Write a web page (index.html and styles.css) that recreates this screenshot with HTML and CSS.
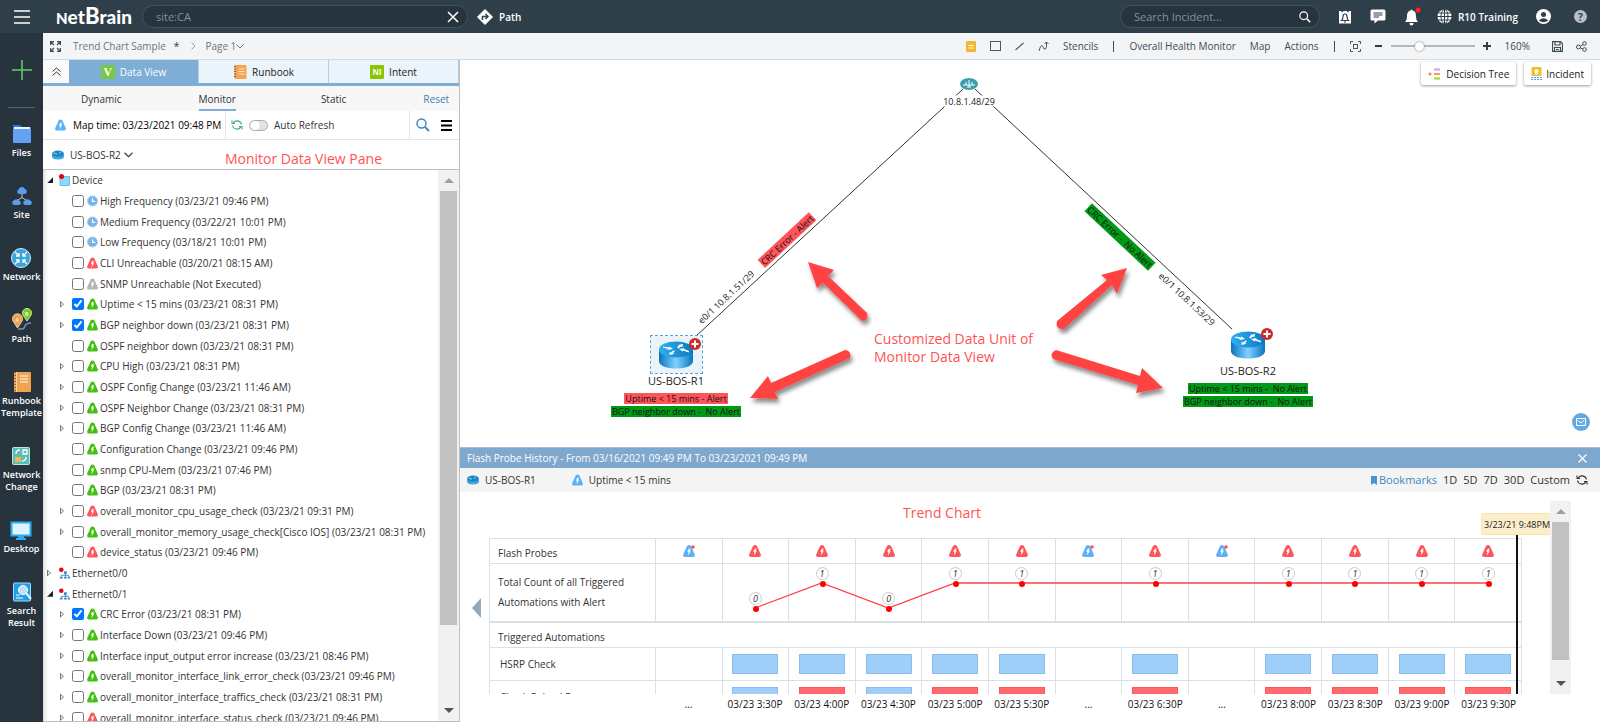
FILE: index.html
```
<!DOCTYPE html>
<html lang="en">
<head>
<meta charset="utf-8">
<title>NetBrain - Trend Chart Sample</title>
<link rel="stylesheet" href="styles.css">
</head>
<body>
<svg class="defs" aria-hidden="true">
  <defs>
    <linearGradient id="side" x1="0" x2="1"><stop offset="0" stop-color="#0a74c0"/><stop offset=".5" stop-color="#7fd2ff"/><stop offset="1" stop-color="#0a74c0"/></linearGradient>
    <linearGradient id="top" x1="0" x2="1"><stop offset="0" stop-color="#2fb2ef"/><stop offset="1" stop-color="#0b78c4"/></linearGradient>
    <filter id="shade" x="-20%" y="-20%" width="150%" height="150%"><feDropShadow dx="2" dy="4" stdDeviation="2" flood-color="#000" flood-opacity=".45"/></filter>
    <symbol id="probe" viewBox="0 0 12 12"><path fill="currentColor" d="M4 1Q6-.9 8 1L11.700 9.200Q12.400 12 10 12H2Q-.4 12 .3 9.200Z"/><path fill="#fff" d="M6.600 3.500Q4.500 4 4.500 7H5.500L4.800 10.500 7.800 6.200H6.600L7.600 4Z"/></symbol>
    <symbol id="clock" viewBox="0 0 12 12"><circle cx="6" cy="6" r="5.500" fill="#76b4e8" stroke="#a9cff0"/><path d="M6 3V6.500H9" fill="none" stroke="#fff" stroke-width="1.300"/></symbol>
    <symbol id="iface" viewBox="0 0 12 12"><path d="M5.500 4H8.500V7H5.500ZM1 10H4V12H1ZM5.500 10H8.500V12H5.500ZM9.500 10H12V12H9.500Z" fill="#3c8bc4"/><path d="M7 6V10M2.500 10V8.500H10.500V10" fill="none" stroke="#3c8bc4"/><circle cx="2.500" cy="2.500" r="2.500" fill="#e60012"/></symbol>
    <symbol id="router" viewBox="0 0 36 28"><path d="M1 8V20C1 25 9 27.500 18 27.500S35 25 35 20V8Z" fill="url(#side)"/><ellipse cx="18" cy="8.500" rx="17" ry="8" fill="url(#top)"/><g fill="#fff"><path d="M5 5.500 11 6.500 11.500 5.500 15 8 9.500 9 10 8 5 6.500ZM31 11.500 25 9.500 24.500 10.500 21 8 26.500 7 26 8 31 10ZM19 6.500 21 4.500 19.800 4 25 3 24.500 6 23 5.500 20.500 7.500ZM17 10 15 12 16.500 12.800 11.500 14 11.500 11 13 11.500 15.500 9.500Z"/></g></symbol>
    <symbol id="mini-router" viewBox="0 0 12 10"><path d="M0 4Q0 .5 6 .5T12 4V6.500Q12 9.500 6 9.500T0 6.500Z" fill="#3fa6e0"/><ellipse cx="6" cy="3.800" rx="5.500" ry="3" fill="#1f86c4"/><path d="M1.500 3 5 4.200M7 3.500 9 2" stroke="#8fd2f5"/></symbol>
    <symbol id="plus" viewBox="0 0 12 12"><circle cx="6" cy="6" r="6" fill="#cf2a2a"/><path d="M6 2.500V9.500M2.500 6H9.500" stroke="#fff" stroke-width="2"/></symbol>
    <symbol id="refresh" viewBox="0 0 12 12"><g fill="none" stroke="currentColor" stroke-width="1.100"><path d="M2 4.500A4.500 4.500 0 0 1 10.500 5.500M10 7.500A4.500 4.500 0 0 1 1.500 6.500"/><path d="M1 1.500V4.500H4M11 10.500V7.500H8"/></g></symbol>
    <symbol id="search" viewBox="0 0 14 14"><circle cx="5.500" cy="5.500" r="4.500" fill="none" stroke="currentColor" stroke-width="1.400"/><path d="M9 9 13 13" stroke="currentColor" stroke-width="1.800"/></symbol>
    <symbol id="caret" viewBox="0 0 8 5"><path d="M.5.500 4 4 7.500.5" fill="none" stroke="currentColor"/></symbol>
  </defs>
</svg>

<header class="header">
  <button class="icon-btn menu" aria-label="Menu"><svg width="16" height="14" viewBox="0 0 16 14"><path d="M0 1H16M0 7H16M0 13H16" stroke="#fff" stroke-width="1.500"/></svg></button>
  <a href="#" class="logo"><span class="logo-small">N</span>et<span class="logo-b">B</span>rain</a>
  <div class="pill pill-main">
    <input type="text" value="site:CA" aria-label="Search">
    <button class="icon-btn" aria-label="Clear"><svg width="12" height="12" viewBox="0 0 12 12"><path d="M1 1 11 11M11 1 1 11" stroke="#fff" stroke-width="1.500"/></svg></button>
  </div>
  <a href="#" class="path-link"><svg width="16" height="16" viewBox="0 0 16 16"><path d="M8 .5 15.500 8 8 15.500.5 8Z" fill="#fff" stroke="#fff" stroke-linejoin="round"/><path d="M5.500 11V7.500H10M8.500 5 11 7.500 8.500 10" fill="none" stroke="#2f3f4a" stroke-width="1.500"/></svg>Path</a>
  <div class="header-right">
    <div class="pill pill-incident">
      <input type="text" placeholder="Search Incident..." aria-label="Search Incident">
      <button class="icon-btn" aria-label="Search"><svg width="12" height="12"><use href="#search"/></svg></button>
    </div>
    <button class="icon-btn" aria-label="Alarm"><svg width="14" height="14" viewBox="0 0 14 14"><path d="M1 1H3L4 2.500 5.500 1H8.500L10 2.500 11 1H13V13.500H1Z" fill="#fff"/><path d="M3.500 10.500Q5 9 5 6.500T7 4 9 6.500 10.500 10.500ZM6 12H8" fill="#fff" stroke="#2f3f4a" stroke-width="1.200"/></svg></button>
    <button class="icon-btn" aria-label="Messages"><svg width="16" height="15" viewBox="0 0 16 15"><path d="M2 .5H14Q15.500.500 15.500 2V10Q15.500 11.500 14 11.500H8L4.500 14.500V11.500H2Q.5 11.500.5 10V2Q.5.500 2 .5Z" fill="#fff"/><path d="M3.500 4H12.500M3.500 6H12.500M3.500 8H9" stroke="#2f3f4a"/></svg></button>
    <button class="icon-btn" aria-label="Notifications"><svg width="18" height="19" viewBox="0 0 18 19"><path d="M1 15Q3 13.500 3 9.500C3 5 5 4 6.500 3.600Q7.500 1.500 8.500 3.600C11 4 12 6 12 9.500Q12 13.500 14 15Z" fill="#fff"/><path d="M5.500 16H9.500Q9.500 18.500 7.500 18.500T5.500 16Z" fill="#fff"/><circle cx="14" cy="3" r="2.500" fill="#f22"/></svg></button>
    <button class="tenant"><svg width="15" height="15" viewBox="0 0 15 15"><circle cx="7.500" cy="7.500" r="7" fill="#fff"/><g fill="none" stroke="#2f3f4a"><ellipse cx="7.500" cy="7.500" rx="3.500" ry="7"/><path d="M7.500 0V15M0 7.500H15M1.500 4H13.500M1.500 11H13.500"/></g></svg>R10 Training</button>
    <button class="icon-btn" aria-label="User"><svg width="15" height="15" viewBox="0 0 15 15"><circle cx="7.500" cy="7.500" r="7.500" fill="#fff"/><circle cx="7.500" cy="5.500" r="2.500" fill="#2f3f4a"/><path d="M2.800 11.500Q7.500 7 12.200 11.500 7.500 15 2.800 11.500Z" fill="#2f3f4a"/></svg></button>
    <button class="help" aria-label="Help">?</button>
  </div>
</header>

<div class="body">
  <nav class="sidebar">
    <button class="icon-btn add" aria-label="Add"><svg width="20" height="20" viewBox="0 0 20 20"><path d="M10 0V20M0 10H20" stroke="#5fd068" stroke-width="1.500"/></svg></button>
    <a href="#" class="side-item"><svg width="22" height="24" viewBox="0 0 22 24"><path d="M2 3H9L11 5H20V9H2Z" fill="#2b74d8"/><path d="M3 5H19V12H3Z" fill="#e9f2fd"/><path d="M2 7H20V20Q20 21 19 21H3Q2 21 2 20Z" fill="#64a3f3"/></svg>Files</a>
    <a href="#" class="side-item"><svg width="22" height="24" viewBox="0 0 22 24"><g fill="#5a9cf0"><path d="M8 10A2.500 2.500 0 0 1 7.500 5.500 3.500 3.500 0 0 1 14 5 2.600 2.600 0 0 1 14 10ZM3 21A2.300 2.300 0 0 1 3 16.500 3.300 3.300 0 0 1 8 16.500 2.300 2.300 0 0 1 8 21ZM14 21A2.300 2.300 0 0 1 14 16.500 3.300 3.300 0 0 1 19 16.500 2.300 2.300 0 0 1 19 21Z"/></g><path d="M11 10V13.500L7 16M11 13.500 15 16" stroke="#b8c8d8" fill="none"/></svg>Site</a>
    <a href="#" class="side-item"><svg width="22" height="24" viewBox="0 0 22 24"><circle cx="11" cy="12" r="9.500" fill="#39a5e0" stroke="#d6ecf8"/><g stroke="#fff" stroke-width="1.300" fill="none"><path d="M5 6 9 10M17 6 13 10M5 18 9 14M17 18 13 14M9 7V10H6M13 7V10H16M9 17V14H6M13 17V14H16"/></g></svg>Network</a>
    <a href="#" class="side-item"><svg width="22" height="24" viewBox="0 0 22 24"><path d="M7 21H11Q13 21 14 18T20 15" fill="none" stroke="#6d93b5" stroke-width="1.500"/><path d="M6.500 20 2 13A5 5 0 1 1 11 13Z" fill="#f0a050" stroke="#f8d0a0"/><path d="M16 13 12 7A4.500 4.500 0 1 1 20 7Z" fill="#7cc820" stroke="#c8f090"/><text x="4.500" y="14" class="pin">A</text><text x="14" y="7.500" class="pin">B</text></svg>Path</a>
    <a href="#" class="side-item"><svg width="22" height="24" viewBox="0 0 22 24"><rect x="3" y="2" width="17" height="20" rx="1" fill="#f2a350"/><path d="M4.500 2V22" stroke="#7a5a30" stroke-width="2" stroke-dasharray="1 2"/><path d="M5.500 2V22" stroke="#fbd29c"/><path d="M9 6H17M9 9H17M9 12H17" stroke="#fff"/></svg>Runbook<br>Template</a>
    <a href="#" class="side-item"><svg width="22" height="24" viewBox="0 0 22 24"><rect x="2.500" y="3.500" width="17" height="17" rx="1" fill="#5cbcb8" stroke="#bfe6e2"/><rect x="5" y="13" width="6" height="5" fill="#f5b54a"/><path d="M6 10Q6 6 10 6M16 13Q16 17 12 17M13 6H17V10H13Z" stroke="#fff" stroke-width="1.300" fill="none"/></svg>Network<br>Change</a>
    <a href="#" class="side-item"><svg width="22" height="24" viewBox="0 0 22 24"><path d="M8 17H14V20H16V22H6V20H8Z" fill="#3aa8e8"/><rect x="1.500" y="4.500" width="19" height="13" fill="#dff2fd" stroke="#28aef0" stroke-width="2"/></svg>Desktop</a>
    <a href="#" class="side-item"><svg width="22" height="24" viewBox="0 0 22 24"><rect x="2.500" y="3" width="17" height="18" rx="1" fill="#1fa0e8" stroke="#a5daf8"/><circle cx="12" cy="10" r="4.500" fill="#bfe0f5" stroke="#fff"/><path d="M15 13 20 19" stroke="#e8f4fc" stroke-width="2"/><path d="M5 15H9M5 18H12" stroke="#fff"/></svg>Search<br>Result</a>
  </nav>

  <div class="main">
    <div class="toolbar">
      <button class="icon-btn expand" aria-label="Full screen"><svg width="11" height="11" viewBox="0 0 11 11"><path d="M.6 4V.600H4M1 1 4 4M7 .6H10.400V4M10 1 7 4M.6 7V10.400H4M1 10 4 7M10.400 7V10.400H7M10 10 7 7" fill="none" stroke="#3d4b55" stroke-width="1.200"/></svg></button>
      <span class="crumb">Trend Chart Sample</span><span class="dirty">*</span>
      <svg width="5" height="8" viewBox="0 0 5 8"><path d="M.5.500 4 4 .5 7.500" fill="none" stroke="#98a0a6"/></svg>
      <button class="crumb page">Page 1<svg width="8" height="5"><use href="#caret"/></svg></button>
      <div class="tools">
        <button class="icon-btn" aria-label="Note"><svg width="10" height="11" viewBox="0 0 10 11"><rect width="10" height="11" rx="1" fill="#f2b632"/><path d="M2.500 4.500H7.500M2.500 7H7.500" stroke="#fff" stroke-width="1.200"/></svg></button>
        <button class="icon-btn" aria-label="Rectangle"><svg width="11" height="11" viewBox="0 0 11 11"><rect x=".5" y=".5" width="10" height="9" fill="none" stroke="#4a5862"/></svg></button>
        <button class="icon-btn" aria-label="Line"><svg width="9" height="9" viewBox="0 0 9 9"><path d="M.5 8 8.500 1" stroke="#4a5862" stroke-width="1.200"/></svg></button>
        <button class="icon-btn" aria-label="Curve"><svg width="11" height="11" viewBox="0 0 11 11"><path d="M1 10 2.500 5.500Q4 3 5 6T7.500 8 8.500 1M6.500 3 8.500 1 10.500 3" fill="none" stroke="#4a5862"/></svg></button>
        <button class="tool-text">Stencils</button><span class="bar"></span>
        <button class="tool-text">Overall Health Monitor</button>
        <button class="tool-text">Map</button>
        <button class="tool-text">Actions</button><span class="bar"></span>
        <button class="icon-btn" aria-label="Fit"><svg width="11" height="11" viewBox="0 0 11 11"><path d="M.5 3V.500H3M8 .5H10.500V3M10.500 8V10.500H8M3 10.500H.5V8" fill="none" stroke="#4a5862"/><rect x="3.500" y="3.500" width="4" height="4" fill="none" stroke="#4a5862"/></svg></button>
        <div class="zoom">
          <button class="icon-btn" aria-label="Zoom out"><svg width="8" height="8"><path d="M0 4H7" stroke="#2f3f4a" stroke-width="2"/></svg></button>
          <input type="range" min="0" max="100" value="32" aria-label="Zoom">
          <button class="icon-btn" aria-label="Zoom in"><svg width="8" height="8"><path d="M0 4H8M4 0V8" stroke="#2f3f4a" stroke-width="2"/></svg></button>
        </div>
        <span class="tool-text">160%</span>
        <div class="end-tools">
          <button class="icon-btn" aria-label="Save"><svg width="11" height="11" viewBox="0 0 11 11"><path d="M.6.600H8.500L10.400 2.500V10.400H.6ZM3 .6V4H8V.6M2.500 10V6.500H8.500V10M4 8.500H7" fill="none" stroke="#3d4b55" stroke-width="1.100"/></svg></button>
          <button class="icon-btn" aria-label="Share"><svg width="11" height="11" viewBox="0 0 11 11"><g fill="none" stroke="#3d4b55"><circle cx="2.500" cy="6" r="2"/><circle cx="8.500" cy="2.500" r="1.800"/><circle cx="8.500" cy="8.500" r="1.800"/><path d="M4.500 5 7 3.500M4.500 7 7 8"/></g></svg></button>
        </div>
      </div>
    </div>

    <div class="content">
      <section class="panel">
        <div class="tabs">
          <button class="collapse" aria-label="Collapse"><svg width="9" height="9" viewBox="0 0 9 9"><path d="M.5 4.500 4.500 1 8.500 4.500M.5 8.500 4.500 5 8.500 8.500" fill="none" stroke="#333"/></svg></button>
          <button class="tab active"><span class="tab-icon v">V</span>Data View</button>
          <button class="tab"><svg width="14" height="14" viewBox="0 0 14 14"><rect x="1.500" width="12" height="14" rx="1" fill="#f5a34c"/><path d="M2 1V13" stroke="#8a6030" stroke-width="2" stroke-dasharray="1 1.500"/><path d="M5.500 4H11.500M5.500 6.500H11.500M5.500 9H11.500" stroke="#fde3c4"/></svg>Runbook</button>
          <button class="tab"><span class="tab-icon ni">NI</span>Intent</button>
        </div>
        <div class="subtabs">
          <button>Dynamic</button><button class="on">Monitor</button><button>Static</button><button class="reset">Reset</button>
        </div>
        <div class="timebar">
          <div class="maptime"><svg class="blue" width="11" height="12"><use href="#probe"/></svg>Map time: 03/23/2021 09:48 PM</div>
          <div class="auto"><svg class="green" width="12" height="12"><use href="#refresh"/></svg><label class="switch"><input type="checkbox" role="switch"><span>Auto Refresh</span></label></div>
          <div class="timeact">
            <button class="icon-btn link" aria-label="Search"><svg width="14" height="14"><use href="#search"/></svg></button>
            <button class="icon-btn" aria-label="List"><svg width="11" height="11"><path d="M0 1H11M0 5.500H11M0 10H11" stroke="#000" stroke-width="2"/></svg></button>
          </div>
        </div>
        <div class="devbar">
          <button class="device"><svg width="12" height="10"><use href="#mini-router"/></svg><span>US-BOS-R2</span><svg width="9" height="6"><use href="#caret"/></svg></button>
          <p class="note">Monitor Data View Pane</p>
        </div>
        <div class="tree">
          <ul class="rows">
            <li class="group open"><button class="tw" aria-label="Collapse"></button><svg viewBox="0 0 11 12"><path d="M1 4 6 2.500H10.500V11.500H1Z" fill="#8ed8f8" stroke="#6bbde4"/><circle cx="2.500" cy="2.500" r="2.500" fill="#e60012"/></svg>Device</li>
            <li><label><input type="checkbox"><svg><use href="#clock"/></svg>High Frequency (03/23/21 09:46 PM)</label></li>
            <li><label><input type="checkbox"><svg><use href="#clock"/></svg>Medium Frequency (03/22/21 10:01 PM)</label></li>
            <li><label><input type="checkbox"><svg><use href="#clock"/></svg>Low Frequency (03/18/21 10:01 PM)</label></li>
            <li><label><input type="checkbox"><svg class="red"><use href="#probe"/></svg>CLI Unreachable (03/20/21 08:15 AM)</label></li>
            <li><label><input type="checkbox"><svg class="gray"><use href="#probe"/></svg>SNMP Unreachable (Not Executed)</label></li>
            <li><button class="tw" aria-label="Expand"></button><label><input type="checkbox" checked><svg class="ok"><use href="#probe"/></svg>Uptime &lt; 15 mins (03/23/21 08:31 PM)</label></li>
            <li><button class="tw" aria-label="Expand"></button><label><input type="checkbox" checked><svg class="ok"><use href="#probe"/></svg>BGP neighbor down (03/23/21 08:31 PM)</label></li>
            <li><label><input type="checkbox"><svg class="ok"><use href="#probe"/></svg>OSPF neighbor down (03/23/21 08:31 PM)</label></li>
            <li><button class="tw" aria-label="Expand"></button><label><input type="checkbox"><svg class="ok"><use href="#probe"/></svg>CPU High (03/23/21 08:31 PM)</label></li>
            <li><button class="tw" aria-label="Expand"></button><label><input type="checkbox"><svg class="ok"><use href="#probe"/></svg>OSPF Config Change (03/23/21 11:46 AM)</label></li>
            <li><button class="tw" aria-label="Expand"></button><label><input type="checkbox"><svg class="ok"><use href="#probe"/></svg>OSPF Neighbor Change (03/23/21 08:31 PM)</label></li>
            <li><button class="tw" aria-label="Expand"></button><label><input type="checkbox"><svg class="ok"><use href="#probe"/></svg>BGP Config Change (03/23/21 11:46 AM)</label></li>
            <li><label><input type="checkbox"><svg class="ok"><use href="#probe"/></svg>Configuration Change (03/23/21 09:46 PM)</label></li>
            <li><label><input type="checkbox"><svg class="ok"><use href="#probe"/></svg>snmp CPU-Mem (03/23/21 07:46 PM)</label></li>
            <li><label><input type="checkbox"><svg class="ok"><use href="#probe"/></svg>BGP (03/23/21 08:31 PM)</label></li>
            <li><button class="tw" aria-label="Expand"></button><label><input type="checkbox"><svg class="red"><use href="#probe"/></svg>overall_monitor_cpu_usage_check (03/23/21 09:31 PM)</label></li>
            <li><button class="tw" aria-label="Expand"></button><label><input type="checkbox"><svg class="ok"><use href="#probe"/></svg>overall_monitor_memory_usage_check[Cisco IOS] (03/23/21 08:31 PM)</label></li>
            <li><label><input type="checkbox"><svg class="red"><use href="#probe"/></svg>device_status (03/23/21 09:46 PM)</label></li>
            <li class="group"><button class="tw" aria-label="Expand"></button><svg><use href="#iface"/></svg>Ethernet0/0</li>
            <li class="group open"><button class="tw" aria-label="Collapse"></button><svg><use href="#iface"/></svg>Ethernet0/1</li>
            <li><button class="tw" aria-label="Expand"></button><label><input type="checkbox" checked><svg class="ok"><use href="#probe"/></svg>CRC Error (03/23/21 08:31 PM)</label></li>
            <li><button class="tw" aria-label="Expand"></button><label><input type="checkbox"><svg class="ok"><use href="#probe"/></svg>Interface Down (03/23/21 09:46 PM)</label></li>
            <li><button class="tw" aria-label="Expand"></button><label><input type="checkbox"><svg class="ok"><use href="#probe"/></svg>Interface input_output error increase (03/23/21 08:46 PM)</label></li>
            <li><button class="tw" aria-label="Expand"></button><label><input type="checkbox"><svg class="ok"><use href="#probe"/></svg>overall_monitor_interface_link_error_check (03/23/21 09:46 PM)</label></li>
            <li><button class="tw" aria-label="Expand"></button><label><input type="checkbox"><svg class="ok"><use href="#probe"/></svg>overall_monitor_interface_traffics_check (03/23/21 08:31 PM)</label></li>
            <li><button class="tw" aria-label="Expand"></button><label><input type="checkbox"><svg class="red"><use href="#probe"/></svg>overall_monitor_interface_status_check (03/23/21 09:46 PM)</label></li>
          </ul>
          <div class="scroll tree-scroll"><i class="up"></i><i class="thumb"></i><i class="down"></i></div>
        </div>
      </section>

      <section class="work">
        <div class="map">
          <svg class="links" width="1140" height="387" viewBox="0 0 1140 387">
            <path d="M503 29 484 47M235 277 484 47M515 29 534 47M772 269 534 47" stroke="#333" fill="none"/>
            <ellipse cx="509" cy="24" rx="9" ry="6" fill="#3aa0ac"/><path d="M503 25H515M506 22V25M509 20V27M512 22V25M507 27H511" stroke="#fff"/>
            <g fill="#ff4343" filter="url(#shade)">
              <path d="M348 202 374 210 368 216 407 253Q409 260 402 261L363 223 357 228Z"/>
              <path d="M290 338 308 316 311 323 385 290Q392 291 390 298L315 332 318 339Z"/>
              <path d="M667 208 641 215 647 220 597 261Q595 270 604 269L652 225 657 234Z"/>
              <path d="M703 328 682 308 680 316 596 290Q589 293 593 299L678 325 676 333Z"/>
            </g>
          </svg>
          <span class="label net">10.8.1.48/29</span>
          <span class="tag alert link-l">CRC Error - Alert</span>
          <span class="label if-l">e0/1 10.8.1.51/29</span>
          <span class="tag fine link-r">CRC Error -&nbsp; No Alert</span>
          <span class="label if-r">e0/1 10.8.1.53/29</span>
          <div class="node r1">
            <div class="node-pic selected"><svg width="36" height="28"><use href="#router"/></svg><svg class="badge" width="12" height="12"><use href="#plus"/></svg></div>
            <span class="name">US-BOS-R1</span>
            <span class="tag alert">Uptime &lt; 15 mins - Alert</span>
            <span class="tag fine">BGP neighbor down -&nbsp; No Alert</span>
          </div>
          <div class="node r2">
            <div class="node-pic"><svg width="36" height="28"><use href="#router"/></svg><svg class="badge" width="12" height="12"><use href="#plus"/></svg></div>
            <span class="name">US-BOS-R2</span>
            <span class="tag fine">Uptime &lt; 15 mins -&nbsp; No Alert</span>
            <span class="tag fine">BGP neighbor down -&nbsp; No Alert</span>
          </div>
          <p class="note map-note">Customized Data Unit of<br>Monitor Data View</p>
          <div class="map-actions">
            <button><svg width="14" height="12" viewBox="0 0 14 12"><circle cx="2" cy="6" r="1.500" fill="#f08a4a"/><path d="M6 1.500H12" stroke="#c9a2ee" stroke-width="2"/><path d="M6 6H12" stroke="#f2a25a" stroke-width="2"/><path d="M6 10.500H12" stroke="#a6d42a" stroke-width="2"/></svg>Decision Tree</button>
            <button><svg width="11" height="13" viewBox="0 0 11 13"><rect x=".5" width="10" height="9" rx="1" fill="#f0c02c"/><path d="M5.500 2A2.300 2.300 0 0 1 7 6V7.500H4V6A2.300 2.300 0 0 1 5.500 2Z" fill="#fff8d8"/><path d="M0 10.500H11M0 12.500H11" stroke="#5a9ee8" stroke-dasharray="2 1"/></svg>Incident</button>
          </div>
          <button class="mail" aria-label="Messages"><svg width="10" height="8" viewBox="0 0 10 8"><path d="M.5.500H9.500V7.500H.5ZM2 2.500 5 5 8 2.500" fill="none" stroke="#fff"/></svg></button>
        </div>

        <div class="history">
          <div class="history-title"><span>Flash Probe History - From 03/16/2021 09:49 PM To 03/23/2021 09:49 PM</span><button class="icon-btn" aria-label="Close"><svg width="9" height="9"><path d="M.5.500 8.500 8.500M8.500.500.5 8.500" stroke="#fff" stroke-width="1.200"/></svg></button></div>
          <div class="history-bar">
            <span class="src"><svg width="12" height="10"><use href="#mini-router"/></svg>US-BOS-R1</span>
            <span class="src"><svg class="blue" width="11" height="12"><use href="#probe"/></svg>Uptime &lt; 15 mins</span>
            <div class="ranges"><button class="bm"><svg width="6" height="9"><path d="M0 0H6V9L3 7 0 9Z" fill="#4a94cf"/></svg>Bookmarks</button><button>1D</button><button>5D</button><button>7D</button><button>30D</button><button>Custom</button><button class="icon-btn" aria-label="Refresh"><svg width="12" height="12"><use href="#refresh"/></svg></button></div>
          </div>
          <div class="chart">
            <button class="prev" aria-label="Previous"></button>
            <div class="plot">
              <p class="note chart-note">Trend Chart</p>
              <table class="grid">
                <tr class="probes"><th scope="row">Flash Probes</th><td><svg class="blue"><use href="#probe"/><circle cx="10" cy="2" r="1.800" fill="#ff5050"/></svg></td><td><svg class="red"><use href="#probe"/></svg></td><td><svg class="red"><use href="#probe"/></svg></td><td><svg class="red"><use href="#probe"/></svg></td><td><svg class="red"><use href="#probe"/></svg></td><td><svg class="red"><use href="#probe"/></svg></td><td><svg class="blue"><use href="#probe"/><circle cx="10" cy="2" r="1.800" fill="#ff5050"/></svg></td><td><svg class="red"><use href="#probe"/></svg></td><td><svg class="blue"><use href="#probe"/><circle cx="10" cy="2" r="1.800" fill="#ff5050"/></svg></td><td><svg class="red"><use href="#probe"/></svg></td><td><svg class="red"><use href="#probe"/></svg></td><td><svg class="red"><use href="#probe"/></svg></td><td><svg class="red"><use href="#probe"/></svg></td></tr>
                <tr class="counts"><th scope="row">Total Count of all Triggered Automations with Alert</th><td></td><td><span class="pt low">0</span></td><td><span class="pt">1</span></td><td><span class="pt low">0</span></td><td><span class="pt">1</span></td><td><span class="pt">1</span></td><td></td><td><span class="pt">1</span></td><td></td><td><span class="pt">1</span></td><td><span class="pt">1</span></td><td><span class="pt">1</span></td><td><span class="pt">1</span></td></tr>
                <tr class="head"><th scope="rowgroup" colspan="14">Triggered Automations</th></tr>
                <tr class="check"><th scope="row">HSRP Check</th><td></td><td><i></i></td><td><i></i></td><td><i></i></td><td><i></i></td><td><i></i></td><td></td><td><i></i></td><td></td><td><i></i></td><td><i></i></td><td><i></i></td><td><i></i></td></tr>
                <tr class="check"><th scope="row">Check Reload Reason</th><td></td><td><i></i></td><td><i class="bad"></i></td><td><i></i></td><td><i class="bad"></i></td><td><i class="bad"></i></td><td></td><td><i class="bad"></i></td><td></td><td><i class="bad"></i></td><td><i class="bad"></i></td><td><i class="bad"></i></td><td><i class="bad"></i></td></tr>
              </table>
              <svg class="trend" viewBox="0 0 13 58" preserveAspectRatio="none"><path d="M1.500 45 2.500 20 3.500 45 4.500 20H12.500" fill="none" stroke="#ff4040" stroke-width="1.300" vector-effect="non-scaling-stroke"/></svg>
              <div class="now"><span>3/23/21 9:48PM</span></div>
            </div>
            <div class="scroll chart-scroll"><i class="up"></i><i class="thumb"></i><i class="down"></i></div>
          </div>
          <div class="axis"><span>...</span><span>03/23 3:30P</span><span>03/23 4:00P</span><span>03/23 4:30P</span><span>03/23 5:00P</span><span>03/23 5:30P</span><span>...</span><span>03/23 6:30P</span><span>...</span><span>03/23 8:00P</span><span>03/23 8:30P</span><span>03/23 9:00P</span><span>03/23 9:30P</span></div>
        </div>
      </section>
    </div>
  </div>
</div>
</body>
</html>
```
FILE: styles.css
```
* { box-sizing: border-box; }
body { margin: 0; height: 100vh; display: flex; flex-direction: column; overflow: hidden; background: #fff; color: #333; font: 10px/14px "Open Sans", "Noto Sans", sans-serif; }
button, input { font: inherit; color: inherit; margin: 0; }
button { border: 0; padding: 0; background: none; cursor: pointer; display: flex; align-items: center; white-space: nowrap; }
a { color: inherit; text-decoration: none; }
p { margin: 0; }
svg { display: block; flex: none; }
.defs { position: absolute; width: 0; height: 0; }
.icon-btn { flex: none; justify-content: center; }
.blue { color: #5db1f8; }
.red { color: #ff555a; }
.gray { color: #b4b4b4; }
.ok { color: #43c010; }
.green { color: #3fae7c; }
.note { color: #ff5353; font-size: 14px; line-height: 18px; }

/* header */
.header { flex: none; height: 33px; display: flex; align-items: center; background: #2f3f4a; color: #fff; font-weight: 600; }
.menu { width: 43px; }
.logo { width: 72px; margin: 0 14px 0 13px; font: 900 19px/24px Lato, sans-serif; }
.logo-small { font-size: 15px; }
.logo-b { font-size: 22px; }
.pill { display: flex; align-items: center; height: 23px; padding: 0 8px 0 13px; border: 1px solid #43535f; border-radius: 12px; background: #27343e; font-size: 11px; font-weight: 400; }
.pill input { flex: 1; min-width: 0; border: 0; padding: 0; outline: 0; background: none; color: #83909a; }
.pill input::placeholder { color: #83909a; opacity: 1; }
.pill-main { width: 326px; }
.path-link { display: flex; align-items: center; gap: 6px; margin-left: 9px; }
.header-right { margin-left: auto; display: flex; align-items: center; gap: 18px; padding-right: 13px; }
.pill-incident { width: 200px; }
.tenant { gap: 6px; margin-left: -3px; font-weight: 600; }
.help { width: 13px; height: 13px; justify-content: center; border-radius: 50%; background: #b9bfc4; color: #2f3f4a; font-weight: 700; margin-left: 5px; }

/* left rail */
.body { flex: 1; min-height: 0; display: flex; }
.sidebar { flex: none; width: 43px; background: #27343e; color: #fff; font-size: 9px; line-height: 12px; font-weight: 600; display: flex; flex-direction: column; align-items: center; gap: 25px; overflow: hidden; }
.add { width: 27px; height: 75px; margin-bottom: -11px; border-bottom: 1px solid #53626d; }
.side-item { display: flex; flex-direction: column; align-items: center; text-align: center; white-space: nowrap; }
.side-item svg { margin-bottom: 1px; }
.pin { font-size: 5px; fill: #fff; }

/* toolbar */
.main { flex: 1; min-width: 0; display: flex; flex-direction: column; }
.toolbar { flex: none; height: 27px; display: flex; align-items: center; padding: 0 13px 0 7px; background: #f3f4f5; border-bottom: 1px solid #d3dce3; }
.crumb { color: #6d757b; }
.expand { margin-right: 12px; }
.dirty { margin: 0 12px 0 8px; }
.page { margin-left: 9px; }
.tools { margin-left: auto; display: flex; align-items: center; gap: 14px; color: #3d4b55; }
.tool-text { flex: none; }
.bar { width: 1px; height: 11px; margin: 0 1px; background: #3d4b55; }
.zoom { display: flex; align-items: center; gap: 8px; }
.zoom input { appearance: none; width: 84px; height: 12px; padding: 0; background: linear-gradient(#b5b8ba, #b5b8ba) center / 100% 2px no-repeat; }
.zoom input::-webkit-slider-thumb { appearance: none; width: 9px; height: 9px; border-radius: 50%; background: #fff; box-shadow: 0 0 2px #666; }
.end-tools { display: flex; gap: 13px; margin-left: 8px; }

/* data view pane */
.content { flex: 1; min-height: 0; display: flex; }
.panel { flex: none; width: 417px; display: flex; flex-direction: column; border-right: 1px solid #bfbfbf; }
.tabs { height: 26px; display: flex; border-bottom: 3px solid #7eadd6; background: #ebf3fb; }
.collapse { width: 26px; justify-content: center; background: #fafafa; }
.tab { flex: 1; justify-content: center; gap: 5px; border-right: 1px solid #b0cfe8; color: #222; }
.tab.active { background: #7eadd6; color: #fff; }
.tab-icon { width: 14px; height: 14px; border-radius: 1px; color: #fff; font-size: 8px; line-height: 14px; font-weight: 700; text-align: center; }
.v { background: #76c944; font-family: "Liberation Serif", serif; font-size: 12px; }
.ni { background: #8bc400; }
.subtabs { height: 25px; display: flex; gap: 77px; padding: 0 20px 0 38px; background: #f7f7f7; }
.subtabs .on { margin-right: 8px; border-bottom: 2px solid #7eadd6; padding-top: 2px; }
.subtabs .reset { margin-left: auto; color: #3b7fb5; }
.timebar { height: 29px; display: flex; align-items: stretch; border-bottom: 1px solid #e4e4e4; }
.timebar > div { display: flex; align-items: center; }
.maptime { width: 183px; gap: 7px; padding-left: 12px; border-right: 1px solid #e4e4e4; color: #000; white-space: nowrap; }
.auto { flex: 1; padding-left: 5px; gap: 6px; }
.switch { display: flex; align-items: center; gap: 6px; }
.switch input { appearance: none; width: 19px; height: 11px; border: 1px solid #aaa; border-radius: 6px; background: radial-gradient(circle at 5px 50%, #fff 4px, #e4e4e4 5px); }
.timeact { width: 50px; justify-content: space-between; padding: 0 7px 0 6px; border-left: 1px solid #e4e4e4; }
.link { color: #3c87c5; }
.devbar { height: 30px; display: flex; align-items: center; justify-content: space-between; padding: 0 77px 0 9px; border-bottom: 1px solid #bfbfbf; }
.device { gap: 3px; }
.device span { margin-left: 3px; }
.devbar .note { padding-top: 8px; }
.tree { flex: 1; min-height: 0; display: flex; overflow: hidden; border-bottom: 1px solid #bfbfbf; }
.rows { flex: 1; height: calc(100% + 7px); margin: 0; padding: 0; list-style: none; display: grid; grid-auto-rows: 1fr; box-shadow: inset 5px 0 5px -4px #ccc; }
.rows li { display: grid; grid-template-columns: 12px 1fr; align-items: center; padding-left: 17px; white-space: nowrap; }
.rows label { grid-column: 2; display: flex; align-items: center; }
.rows label input { width: 12px; height: 12px; margin: 0 3px 0 0; }
.rows svg { width: 11px; height: 12px; margin-right: 2px; }
.rows .group { display: flex; padding-left: 4px; }
.rows .group .tw { margin-right: 5px; }
.tw { width: 7px; height: 9px; }
.tw::before { content: ""; width: 4px; height: 7px; background: #777; clip-path: path(evenodd, "M0 0 4 3.500 0 7ZM1 2 3 3.500 1 5Z"); }
.open .tw::before { width: 6px; height: 6px; background: #222; clip-path: polygon(100% 0, 100% 100%, 0 100%); }
.scroll { flex: none; display: flex; flex-direction: column; align-items: center; background: #f1f1f1; }
.scroll i { width: 0; border: 5px solid transparent; border-top: 0; border-bottom-color: #a0a0a0; }
.scroll .down { border-top: 5px solid #555; border-bottom: 0; margin-top: auto; }
.scroll .thumb { width: 17px; border: 0; background: #c1c1c1; }
.tree-scroll { width: 21px; padding: 8px 0; }
.tree-scroll .thumb { height: 434px; margin-top: 8px; }

/* topology map */
.work { flex: 1; min-width: 0; display: flex; flex-direction: column; }
.map { flex: 1; min-height: 0; position: relative; overflow: hidden; color: #222; }
.links { position: absolute; left: 0; top: 0; }
.label, .map > .tag { position: absolute; transform: translate(-50%, -50%); white-space: nowrap; }
.tag { display: block; width: max-content; padding: 0 1px; font-size: 9px; line-height: 11px; color: #111; }
.alert { background: #ff555a; }
.fine { background: #009a17; }
.label { font-size: 9px; line-height: 11px; }
.net { left: 509px; top: 41px; background: #fff; }
.map > .link-l { left: 327px; top: 180px; transform: translate(-50%, -50%) rotate(-43deg); }
.if-l { left: 266px; top: 237px; transform: translate(-50%, -50%) rotate(-43deg); }
.map > .link-r { left: 660px; top: 177px; transform: translate(-50%, -50%) rotate(43deg); }
.if-r { left: 727px; top: 239px; transform: translate(-50%, -50%) rotate(43deg); }
.node { position: absolute; width: 140px; display: flex; flex-direction: column; align-items: center; gap: 2px; }
.r1 { left: 146px; top: 276px; }
.r2 { left: 718px; top: 266px; }
.node-pic { position: relative; width: 51px; height: 37px; display: grid; place-items: center; }
.selected { outline: 1px dashed #57a5d5; background: #eaf3fa; }
.badge { position: absolute; right: 1px; top: 2px; }
.name { margin: -1px 0 3px; font-size: 11px; }
.map-note { position: absolute; left: 414px; top: 270px; }
.map-actions { position: absolute; right: 9px; top: 2px; display: flex; gap: 8px; }
.map-actions button { height: 23px; padding: 0 7px; gap: 4px; background: #fff; border-radius: 2px; box-shadow: 0 1px 3px rgba(0, 0, 0, .4); }
.mail { position: absolute; right: 10px; bottom: 16px; width: 18px; height: 18px; border-radius: 50%; justify-content: center; background: #63a9e0; }

/* probe history */
.history { flex: none; display: flex; flex-direction: column; height: 275px; }
.history-title { height: 21px; display: flex; align-items: center; justify-content: space-between; padding: 0 13px 0 7px; background: #7ea8cd; color: #fff; border-top: 1px solid #a8bccf; }
.history-bar { height: 24px; display: flex; align-items: center; gap: 36px; padding: 0 12px 0 7px; background: #f4f4f4; }
.src { display: flex; align-items: center; gap: 6px; }
.ranges { margin-left: auto; display: flex; align-items: center; gap: 6px; font-size: 11px; }
.bm { gap: 2px; color: #3f86bf; }
.chart { height: 202px; display: flex; padding-right: 29px; }
.prev { align-self: flex-start; margin: 106px 8px 0 12px; border: 10px solid transparent; border-left: 0; border-right: 9px solid #8faac2; }
.plot { flex: 1; min-width: 0; position: relative; overflow: hidden; padding: 46px 28px 0 0; }
.chart-note { position: absolute; left: 414px; top: 12px; }
.grid { width: 100%; table-layout: fixed; border-collapse: collapse; }
.grid th, .grid td { padding: 0; border: 1px solid #d8e0e8; text-align: center; font-weight: 400; }
.grid th { width: 166px; padding: 0 8px; text-align: left; line-height: 20px; }
.grid .probes th, .grid .head th { padding-top: 4px; }
.probes { height: 25px; }
.counts { height: 58px; border-bottom: 2px solid #d8e0e8; }
.grid .counts td { vertical-align: top; }
.head { height: 25px; }
.check { height: 33px; }
.grid .check th { padding-left: 10px; }
.grid svg { width: 12px; height: 12px; margin: auto; }
.check i { display: block; width: 46px; height: 20px; margin: auto; background: #9fcff8; border: 1px solid #8abdea; }
.check .bad { background: #ff6a6e; border-color: #f55; }
.pt { position: relative; z-index: 1; display: block; width: 11px; height: 11px; margin: 4px auto 0; border-radius: 50%; background: #fff; box-shadow: 0 0 0 1px #ccc; font-size: 9px; line-height: 11px; font-style: italic; }
.pt::after { content: ""; position: absolute; left: 3px; top: 13px; width: 6px; height: 6px; border-radius: 50%; background: #f00; }
.low { margin-top: 29px; }
.trend { position: absolute; left: 166px; top: 71px; width: calc(100% - 194px); height: 58px; }
.now { position: absolute; right: 0; top: 21px; bottom: 0; width: 69px; }
.now span { position: relative; z-index: 1; display: block; height: 22px; padding-left: 2px; border: 1px solid #f7e3b0; background: #fdeecb; border-right: 0; border-radius: 3px 0 0 3px; font-size: 9px; line-height: 21px; color: #222; white-space: nowrap; }
.now::after { content: ""; position: absolute; left: 35px; top: 20px; bottom: 0; width: 2px; background: #111; }
.chart-scroll { width: 21px; margin-top: 9px; padding: 8px 0; }
.chart-scroll .thumb { height: 138px; margin-top: 8px; }
.axis { display: grid; grid-template-columns: repeat(13, 1fr); padding: 3px 78px 0 195px; text-align: center; white-space: nowrap; color: #111; }
```
